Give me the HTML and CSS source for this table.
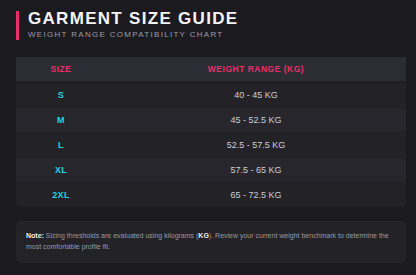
FILE: index.html
```html
<!DOCTYPE html>
<html lang="en">
<head>
<meta charset="utf-8">
<title>Garment Size Guide</title>
<link rel="stylesheet" href="styles.css">
</head>
<body>
<div class="page">
  <header class="head">
    <h1 class="title">GARMENT SIZE GUIDE</h1>
    <p class="subtitle">WEIGHT RANGE COMPATIBILITY CHART</p>
  </header>
  <div class="card">
    <table class="chart">
      <thead>
        <tr><th class="c-size">SIZE</th><th>WEIGHT RANGE (KG)</th></tr>
      </thead>
      <tbody>
        <tr><td class="c-size">S</td><td>40 - 45 KG</td></tr>
        <tr><td class="c-size">M</td><td>45 - 52.5 KG</td></tr>
        <tr><td class="c-size">L</td><td>52.5 - 57.5 KG</td></tr>
        <tr><td class="c-size">XL</td><td>57.5 - 65 KG</td></tr>
        <tr><td class="c-size">2XL</td><td>65 - 72.5 KG</td></tr>
      </tbody>
    </table>
  </div>
  <div class="note">
    <strong>Note:</strong> Sizing thresholds are evaluated using kilograms (<b>KG</b>). Review your current weight benchmark to determine the most comfortable profile fit.
  </div>
</div>
</body>
</html>
```
FILE: styles.css
```css
* { box-sizing: border-box; }
html, body { margin: 0; padding: 0; }
body {
  background: #1b1a1f;
  font-family: "Liberation Sans", Arial, Helvetica, sans-serif;
  width: 416px;
  height: 275px;
  overflow: hidden;
}
.page {
  padding: 11px 10px 0 16px;
  display: flex;
  flex-direction: column;
}
.head {
  border-left: 3px solid #e8306a;
  padding-left: 9px;
  display: flex;
  flex-direction: column;
  gap: 4px;
}
.title {
  margin: 0;
  font-size: 17px;
  line-height: 15px;
  font-weight: 700;
  letter-spacing: 1.3px;
  color: #f4f4f6;
}
.subtitle {
  margin: 0;
  font-size: 8px;
  line-height: 10px;
  letter-spacing: 1.3px;
  color: #9b9cab;
}
.card {
  margin-top: 17px;
  background: #222227;
  border-radius: 0 0 5px 5px;
  overflow: hidden;
}
.chart {
  width: 100%;
  border-collapse: collapse;
}
.chart th, .chart td {
  height: 25px;
  padding: 0;
  text-align: center;
  vertical-align: middle;
}
.chart th {
  background: #2c2c34;
  color: #e8306a;
  font-size: 8.5px;
  font-weight: 700;
  letter-spacing: 0.5px;
  border-bottom: 2px solid #1e1e23;
}
.chart .c-size { width: 90px; }
.chart td {
  color: #cfcfd6;
  font-size: 9px;
  border-top: 1px solid #1f1f24;
}
.chart tbody tr:first-child td { border-top: 0; }
.chart tbody tr:nth-child(odd) td { background: #222227; }
.chart tbody tr:nth-child(even) td { background: #26262c; }
.chart td.c-size {
  color: #20d4e6;
  font-weight: 700;
  letter-spacing: 0.3px;
}
.note {
  margin-top: 14px;
  background: #222227;
  border: 1px solid #26262c;
  border-radius: 5px;
  padding: 8px 9px 10px;
  font-size: 7px;
  line-height: 11px;
  color: #9a9aa6;
}
.note strong, .note b {
  color: #f2f2f4;
  font-weight: 700;
}
```
